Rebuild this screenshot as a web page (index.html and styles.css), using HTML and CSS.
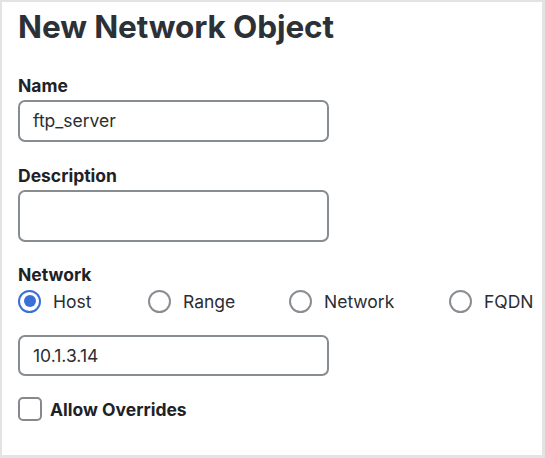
FILE: index.html
```html
<!DOCTYPE html>
<html>
<head>
<meta charset="utf-8">
<link rel="stylesheet" href="styles.css">
</head>
<body>
<div class="frame">
  <h1 class="title">New Network Object</h1>
  <div class="field first">
    <label class="label">Name</label>
    <div class="input">ftp_server</div>
  </div>
  <div class="field">
    <label class="label">Description</label>
    <div class="input tall"></div>
  </div>
  <div class="field net">
    <label class="label">Network</label>
    <div class="radios">
      <div class="radio"><span class="dot on"></span>Host</div>
      <div class="radio"><span class="dot"></span>Range</div>
      <div class="radio"><span class="dot"></span>Network</div>
      <div class="radio"><span class="dot"></span>FQDN</div>
    </div>
  </div>
  <div class="input ip">10.1.3.14</div>
  <div class="check"><span class="box"></span>Allow Overrides</div>
</div>
</body>
</html>
```
FILE: styles.css
```css
html, body { margin: 0; padding: 0; }
body {
  background: #e3e3e3;
  width: 545px;
  height: 458px;
  padding: 2px 3px 3px 2px;
  box-sizing: border-box;
  font-family: Inter, "Noto Sans", sans-serif;
  color: #23282d;
}
.frame {
  background: #fff;
  height: 100%;
  padding: 0 0 0 16px;
  box-sizing: border-box;
}
.title {
  margin: 0;
  padding-top: 6px;
  font-size: 31.5px;
  font-weight: 700;
  line-height: 38px;
  color: #2c3138;
  letter-spacing: -0.1px;
}
.field { margin-top: 24px; }
.field.first { margin-top: 30px; }
.label {
  display: block;
  font-size: 17.5px;
  font-weight: 700;
  line-height: 20px;
  color: #1e2227;
  margin-bottom: 4px;
}
.input {
  width: 311px;
  height: 42px;
  box-sizing: border-box;
  border: 2px solid #878c91;
  border-radius: 7px;
  padding: 0 13px;
  font-size: 17.5px;
  line-height: 38px;
  color: #2a2e33;
}
.input.tall { height: 52px; }
.net { margin-top: 23px; }
.net .label { margin-bottom: 3px; }
.radios {
  display: grid;
  grid-template-columns: 130px 141px 160px auto;
  height: 26px;
  align-items: center;
}
.radio {
  display: flex;
  align-items: center;
  font-size: 17.5px;
  color: #2a2e33;
}
.dot {
  width: 23px;
  height: 23px;
  box-sizing: border-box;
  border: 2px solid #8a8e92;
  border-radius: 50%;
  margin-right: 12px;
  position: relative;
}
.dot.on { border-color: #3a6fd8; }
.dot.on::after {
  content: "";
  position: absolute;
  left: 3.5px; top: 3.5px;
  width: 12px; height: 12px;
  border-radius: 50%;
  background: #3a6fd8;
}
.ip { margin-top: 21px; height: 41px; line-height: 37px; }
.check {
  display: flex;
  align-items: center;
  margin-top: 21px;
  font-size: 17.5px;
  font-weight: 700;
  color: #1e2227;
}
.box {
  width: 24px;
  height: 24px;
  box-sizing: border-box;
  border: 2px solid #85898d;
  border-radius: 5px;
  margin-right: 8px;
}
```
